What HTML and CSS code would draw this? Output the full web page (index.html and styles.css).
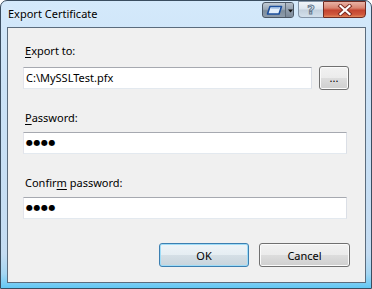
FILE: index.html
```html
<!DOCTYPE html>
<html>
<head>
<meta charset="utf-8">
<title>Export Certificate</title>
<link rel="stylesheet" href="styles.css">
</head>
<body>
<div class="window">
  <div class="titlebar">
    <span class="title">Export Certificate</span>
    <div class="caption">
      <div class="cap-group">
        <span class="cap-icon">
          <svg width="22" height="14" viewBox="0 0 22 14">
            <path d="M7 3.5 H18.5 L16 11 H4.5 Z" fill="#e4effb" stroke="#1d4f9c" stroke-width="1.6" stroke-linejoin="round"/>
            <path d="M8.2 5 H16.5" stroke="#7fa6d6" stroke-width="1"/>
          </svg>
        </span>
        <span class="cap-drop">
          <svg width="9" height="14" viewBox="0 0 9 14">
            <path d="M2 6.5 H7 L4.5 9.5 Z" fill="#111"/>
          </svg>
        </span>
      </div>
      <div class="cap-help">?</div>
      <div class="cap-close">
        <svg width="16" height="12" viewBox="0 0 16 12">
          <path d="M3.5 2 L12.5 10 M12.5 2 L3.5 10" stroke="#7a2a20" stroke-width="4" stroke-linecap="square"/>
          <path d="M3.5 2 L12.5 10 M12.5 2 L3.5 10" stroke="#fff" stroke-width="2.2" stroke-linecap="square"/>
        </svg>
      </div>
    </div>
  </div>
  <div class="client">
    <div class="lbl lbl-first"><u>E</u>xport to:</div>
    <div class="file-row">
      <div class="tb tb-file">C:\MySSLTest.pfx</div>
      <button class="btn btn-browse">...</button>
    </div>
    <div class="lbl lbl-pass"><u>P</u>assword:</div>
    <div class="tb tb-pass">●●●●</div>
    <div class="lbl lbl-confirm">Confir<u>m</u> password:</div>
    <div class="tb tb-pass">●●●●</div>
    <div class="buttons">
      <button class="btn btn-ok">OK</button>
      <button class="btn btn-cancel">Cancel</button>
    </div>
  </div>
</div>
</body>
</html>
```

FILE: styles.css
```css
html, body {
  margin: 0;
  padding: 0;
}

body {
  width: 372px;
  height: 289px;
  overflow: hidden;
  background: #ffffff;
  font-family: "Noto Sans", "Open Sans", sans-serif;
  font-size: 11px;
  color: #000;
}

.window {
  box-sizing: border-box;
  width: 372px;
  height: 289px;
  border: 1px solid #3a4d60;
  border-radius: 7px 7px 0 0;
  background: linear-gradient(to bottom, #d4e9fb 0, #cbe2f6 30%, #c4dcf2 88%, #a5d6f2 95%, #62c8f4 100%);
  display: flex;
  flex-direction: column;
}

.titlebar {
  height: 26px;
  display: flex;
  align-items: flex-start;
  padding: 0 5px 0 7px;
}

.title {
  flex: 1;
  margin-top: 6px;
  line-height: 14px;
  text-shadow: 0 0 4px rgba(255, 255, 255, 0.8);
}

.caption {
  display: flex;
  align-items: flex-start;
}

.cap-group {
  box-sizing: border-box;
  display: flex;
  width: 32px;
  height: 16px;
  margin-top: 1px;
  margin-right: 4px;
  border: 1px solid #4a5664;
  border-radius: 3px;
  overflow: hidden;
  background: linear-gradient(to bottom, #c2ccd6 0, #9aa8b6 45%, #7d8c9b 55%, #8e9cab 100%);
}

.cap-icon {
  width: 22px;
  height: 14px;
  display: block;
}

.cap-drop {
  width: 8px;
  height: 14px;
  display: block;
  border-left: 1px solid #5f6c79;
  background: linear-gradient(to bottom, #b4bec9 0, #8f9cab 50%, #7a8898 100%);
}

.cap-icon svg,
.cap-drop svg,
.cap-close svg {
  display: block;
}

.cap-help {
  box-sizing: border-box;
  width: 25px;
  height: 17px;
  border: 1px solid #8495a8;
  border-right: none;
  border-radius: 0 0 0 4px;
  background: linear-gradient(to bottom, #f1f5f9 0, #dde6ef 45%, #c3d0dd 55%, #d3e0ec 100%);
  font-family: "DejaVu Sans", sans-serif;
  font-size: 13px;
  font-weight: bold;
  line-height: 15px;
  text-align: center;
  color: #dfe7ef;
  -webkit-text-stroke: 1px #66798d;
}

.cap-close {
  box-sizing: border-box;
  width: 43px;
  height: 17px;
  border: 1px solid #6f2b22;
  border-radius: 0 0 4px 0;
  background: linear-gradient(to bottom, #e8b3a6 0, #d98470 40%, #c4442f 55%, #d0593d 85%, #e48a5c 100%);
  display: flex;
  align-items: center;
  justify-content: center;
}

.client {
  box-sizing: border-box;
  height: 256px;
  margin: 0 5px 0 6px;
  border: 1px solid #5b6c7d;
  background: #f0f0f0;
  padding: 16px 15px 0 15px;
}

.lbl {
  line-height: 14px;
  margin-left: 2px;
}

.lbl-first {
  margin-bottom: 8px;
}

.lbl-pass {
  margin-top: 21px;
  margin-bottom: 7px;
}

.lbl-confirm {
  margin-top: 22px;
  margin-bottom: 7px;
}

.lbl u {
  text-underline-offset: 2px;
}

.file-row {
  display: flex;
  align-items: center;
  gap: 7px;
  height: 24px;
}

.tb {
  box-sizing: border-box;
  width: 324px;
  height: 22px;
  background: #fff;
  border: 1px solid;
  border-color: #a6a9b0 #dbdfe6 #e3e9ef #e2e3ea;
  padding: 0 2px;
  line-height: 20px;
  white-space: nowrap;
}

.tb-file {
  width: 289px;
}

.tb-pass {
  font-family: "DejaVu Sans", sans-serif;
  font-size: 8px;
  letter-spacing: 0.5px;
}

.btn {
  box-sizing: border-box;
  height: 24px;
  padding: 0;
  border: 1px solid #707070;
  border-radius: 3px;
  background: linear-gradient(to bottom, #f2f2f2 0, #ebebeb 50%, #dddddd 50%, #cfcfcf 100%);
  box-shadow: inset 0 0 0 1px #fbfbfb;
  font-family: "Noto Sans", "Open Sans", sans-serif;
  font-size: 11px;
  color: #000;
}

.btn-browse {
  width: 30px;
  line-height: 18px;
}

.buttons {
  display: flex;
  justify-content: flex-end;
  gap: 10px;
  margin-top: 24px;
}

.btn-ok {
  width: 90px;
  border-color: #3c7fb1;
  background: linear-gradient(to bottom, #eef4f8 0, #e5edf2 50%, #d5dfe6 50%, #c8d4dc 100%);
  box-shadow: inset 0 0 0 1px #9fdcf7;
}

.btn-cancel {
  width: 91px;
}
```
